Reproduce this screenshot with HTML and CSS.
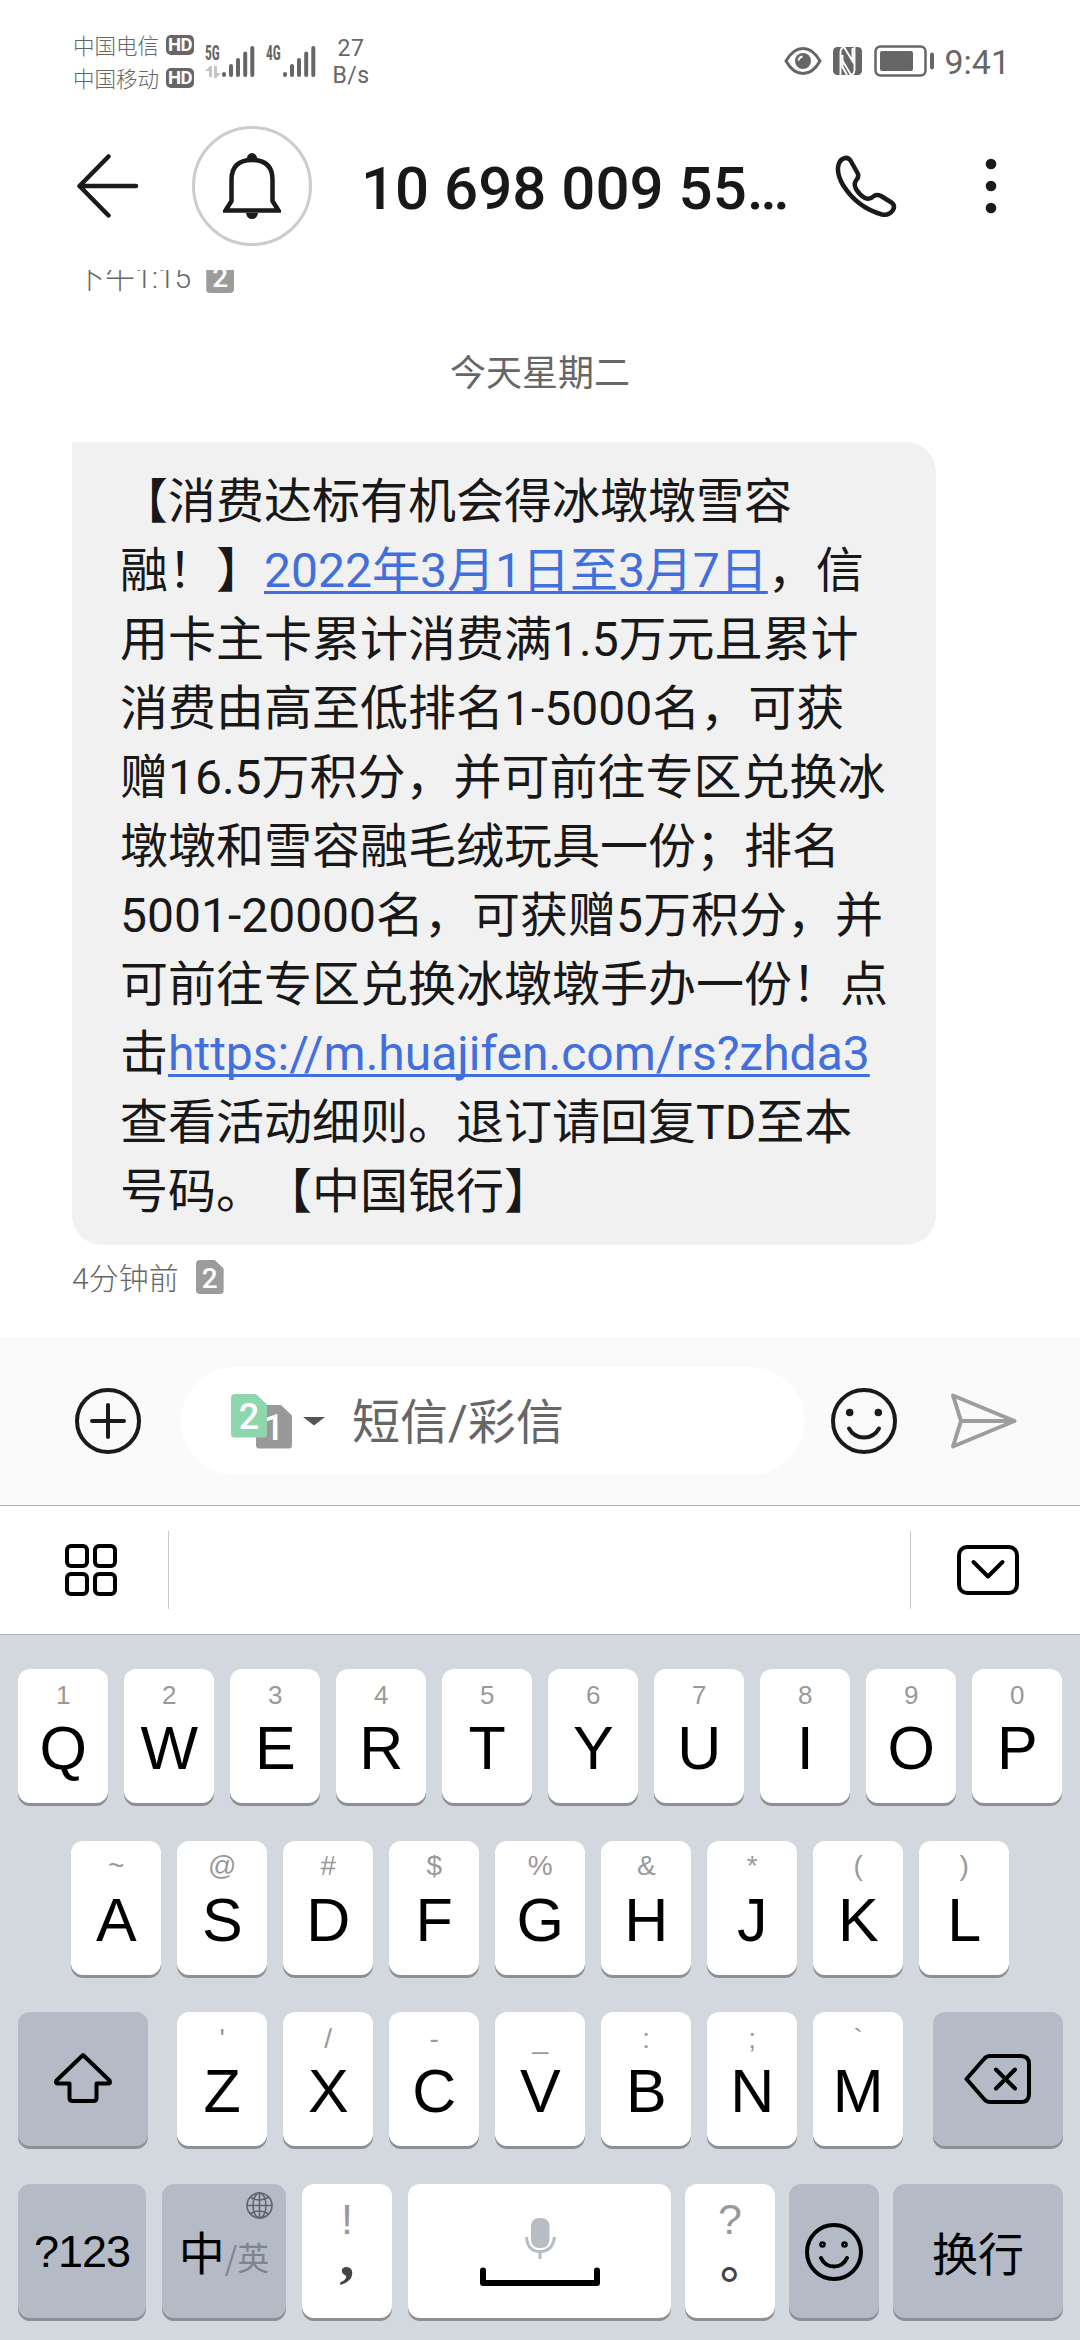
FILE: index.html
```html
<!DOCTYPE html>
<html lang="zh-CN">
<head>
<meta charset="utf-8">
<title>短信</title>
<link rel="stylesheet" href="styles.css">
</head>
<body>
<div class="status">
  <div class="carriers">
    <div class="carrier">中国电信<b class="hd">HD</b></div>
    <div class="carrier">中国移动<b class="hd">HD</b></div>
  </div>
  <div class="signal">
    <div class="net"><span>5G</span>
      <svg width="16" height="12" viewBox="0 0 16 12" fill="#c4c4c4"><path d="M0 5 5 0h2v11H4V5zM9 0h3v7h4l-5 5H9z"/></svg>
    </div>
    <svg class="bars" width="33" height="32" viewBox="0 0 33 32"><path d="M2 29v1M9 21v9M16 15v15M23.200 8.500V30M30.300 3v27"/></svg>
  </div>
  <div class="signal second">
    <div class="net"><span>4G</span></div>
    <svg class="bars" width="33" height="32" viewBox="0 0 33 32"><path d="M2 29v1M9 21v9M16 15v15M23.200 8.500V30M30.300 3v27"/></svg>
  </div>
  <div class="speed"><span>27</span><span>B/s</span></div>
  <div class="status-right">
    <svg width="38" height="30" viewBox="0 0 38 30"><path d="M2 15Q9 2.500 19 2.500T36 15Q29 27.500 19 27.500T2 15z" fill="none" stroke="#666" stroke-width="3"/><circle cx="19" cy="15" r="8" fill="#666"/><path d="M14.500 14.500a5 5 0 0 1 4-4" fill="none" stroke="#fff" stroke-width="2"/></svg>
    <svg width="29" height="28" viewBox="0 0 29 28"><rect width="29" height="28" rx="4.500" fill="#666"/><path d="M7.500 28V5q0-4 3.500-5l8.500 14V1M9.500 8v12l4.500 8M21.500 0v23q0 4-3.500 5L9.500 13.500" fill="none" stroke="#fff" stroke-width="1.900"/></svg>
    <svg width="61" height="32" viewBox="0 0 61 32"><rect x="1.500" y="1.500" width="50" height="29" rx="5" fill="none" stroke="#666" stroke-width="2.500"/><rect x="6" y="6" width="33" height="20" rx="2" fill="#666"/><path d="M58 9.500v13" stroke="#666" stroke-width="4" stroke-linecap="round"/></svg>
    <span class="clock">9:41</span>
  </div>
</div>

<header class="header">
  <svg width="62" height="64" viewBox="0 0 62 64" class="line"><path d="M59 32H2.500L31.500 2.500M2.500 32 31.500 61.500"/></svg>
  <div class="avatar">
    <svg width="58" height="68" viewBox="0 0 58 68"><path d="M8.500 49V28q0-20 20.500-20t20.500 20v21l6 9.500H2.500z" fill="none" stroke="#1a1a1a" stroke-width="4.500"/><path d="M23.500 8a5.500 7 0 0 1 11 0zM23 61h12q-1 6-6 6t-6-6z" fill="#1a1a1a"/></svg>
  </div>
  <h1 class="title">10 698 009 55…</h1>
  <svg width="62" height="64" viewBox="834 153 62 64" class="line phone"><path d="M841.500 158Q846.500 155 849.500 159.500L856.500 172Q858.500 175.500 855 179.500Q852.500 183 855 188Q859 194.500 864 197Q869 199 873 195Q876 193 880 195L890.500 201.500Q894.500 204.500 892 209Q888 215 881 213.500Q856 206.500 842 184Q836.500 174.500 837 167Q837.500 160.500 841.500 158z"/></svg>
  <svg class="more" width="12" height="56" viewBox="0 0 12 56"><circle cx="6" cy="6" r="5.300"/><circle cx="6" cy="28" r="5.300"/><circle cx="6" cy="50" r="5.300"/></svg>
</header>

<main class="thread">
  <div class="meta previous"><span>下午1:15</span><b class="sim">2</b></div>
  <div class="day">今天星期二</div>
  <p class="bubble">【消费达标有机会得冰墩墩雪容<br>融！】<a>2022年3月1日至3月7日</a>，信<br>用卡主卡累计消费满1.5万元且累计<br>消费由高至低排名1-5000名，可获<br>赠16.5万积分，并可前往专区兑换冰<br>墩墩和雪容融毛绒玩具一份；排名<br>5001-20000名，可获赠5万积分，并<br>可前往专区兑换冰墩墩手办一份！点<br>击<a>https://m.huajifen.com/rs?zhda3</a><br>查看活动细则。退订请回复TD至本<br>号码。【中国银行】</p>
  <div class="meta"><span>4分钟前</span><b class="sim">2</b></div>
</main>

<div class="composer">
  <svg width="68" height="68" viewBox="0 0 68 68" class="line"><circle cx="34" cy="34" r="31"/><path d="M34 18v32M18 34h32"/></svg>
  <div class="field">
    <div class="sims"><b class="sim one">1</b><b class="sim two">2</b></div>
    <svg width="22" height="9" viewBox="0 0 22 9"><path d="M0 0h22L11 8.500z" fill="#555"/></svg>
    <span class="placeholder">短信/彩信</span>
  </div>
  <svg width="68" height="68" viewBox="0 0 68 68" class="line smile"><circle cx="34" cy="34" r="31"/><path d="M19 41.500q5 9 15 9t15-9"/><circle cx="19.700" cy="25.500" r="1.800"/><circle cx="48.300" cy="25.500" r="1.800"/></svg>
  <svg width="70" height="58" viewBox="0 0 70 58" class="line send"><path d="M4 3.500 65.500 29 4 54.500 12 29zM12 29h52"/></svg>
</div>

<div class="toolbar">
  <svg width="52" height="52" viewBox="0 0 52 52" class="line dark"><rect x="2" y="2" width="20" height="20" rx="4"/><rect x="30" y="2" width="20" height="20" rx="4"/><rect x="2" y="30" width="20" height="20" rx="4"/><rect x="30" y="30" width="20" height="20" rx="4"/></svg>
  <div class="strip"></div>
  <svg width="62" height="50" viewBox="0 0 62 50" class="line dark"><rect x="2" y="2" width="58" height="46" rx="8"/><path d="M16.500 17 31 31.500 45.500 17"/></svg>
</div>

<div class="keyboard">
  <div class="row">
    <div class="key num"><i>1</i>Q</div><div class="key num"><i>2</i>W</div><div class="key num"><i>3</i>E</div><div class="key num"><i>4</i>R</div><div class="key num"><i>5</i>T</div><div class="key num"><i>6</i>Y</div><div class="key num"><i>7</i>U</div><div class="key num"><i>8</i>I</div><div class="key num"><i>9</i>O</div><div class="key num"><i>0</i>P</div>
  </div>
  <div class="row">
    <div class="key"><i>~</i>A</div><div class="key"><i>@</i>S</div><div class="key"><i>#</i>D</div><div class="key"><i>$</i>F</div><div class="key"><i>%</i>G</div><div class="key"><i>&amp;</i>H</div><div class="key"><i>*</i>J</div><div class="key"><i>(</i>K</div><div class="key"><i>)</i>L</div>
  </div>
  <div class="row spread">
    <div class="key fn wide"><svg width="60" height="52" viewBox="0 0 60 52" class="line dark"><path d="M30 3 56.500 28.500q1.500 3-1.500 3H43.500V46q0 3-3 3h-21q-3 0-3-3V31.500H5q-3 0-1.500-3z"/></svg></div>
    <div class="letters">
      <div class="key"><i>'</i>Z</div><div class="key"><i>/</i>X</div><div class="key"><i>-</i>C</div><div class="key"><i>_</i>V</div><div class="key"><i>:</i>B</div><div class="key"><i>;</i>N</div><div class="key"><i>`</i>M</div>
    </div>
    <div class="key fn wide"><svg width="68" height="50" viewBox="0 0 68 50" class="line dark"><path d="M2.500 25 20 5q2.500-3 6-3h31q8 0 8 8v30q0 8-8 8H26q-3.500 0-6-3zM32 15.500 51 34.500M51 15.500 32 34.500"/></svg></div>
  </div>
  <div class="row bottom">
    <div class="key fn symbols">?123</div>
    <div class="key fn lang">
      <svg class="globe" width="27" height="27" viewBox="0 0 27 27"><circle cx="13.500" cy="13.500" r="12.500"/><ellipse cx="13.500" cy="13.500" rx="6.500" ry="12.500"/><path d="M13.500 1v25M1 13.500h25M4 5q9.500 6 19 0M4 22q9.500-6 19 0"/></svg>
      <span class="zh">中</span><span class="en">/英</span>
    </div>
    <div class="key punct"><i>!</i><span class="comma">,</span></div>
    <div class="key space"><svg width="122" height="72" viewBox="479 2216 122 72"><rect x="531" y="2218" width="18.500" height="30" rx="8" fill="#b8bcc3"/><path d="M526.500 2237q1 14.500 13.500 14.500t14.500-14.500M540 2252v7" fill="none" stroke="#b8bcc3" stroke-width="3"/><path d="M483 2270.500V2283h114v-12.500" fill="none" stroke="#000" stroke-width="6" stroke-linecap="round" stroke-linejoin="round"/></svg></div>
    <div class="key punct"><i>?</i><span class="stop">。</span></div>
    <div class="key fn emoji"><svg width="58" height="60" viewBox="0 0 58 60" class="line dark"><circle cx="29" cy="30" r="27"/><path d="M16 36q4 8.500 13 8.500t13-8.500"/><circle cx="17.500" cy="22.500" r="1.300"/><circle cx="39.500" cy="22.500" r="1.300"/></svg></div>
    <div class="key fn enter">换行</div>
  </div>
</div>
</body>
</html>
```
FILE: styles.css
```css
* { box-sizing: border-box; }
body {
  margin: 0;
  width: 1080px;
  height: 2340px;
  overflow: hidden;
  display: flex;
  flex-direction: column;
  background: #fff;
  color: #181818;
  font-family: Roboto, "Noto Sans CJK SC", sans-serif;
  text-spacing-trim: space-all;
}
svg { display: block; flex: none; }
.line { fill: none; stroke: #1a1a1a; stroke-width: 4; stroke-linecap: round; stroke-linejoin: round; }
.dark { stroke: #000; }

/* status bar */
.status { display: flex; height: 126px; padding: 29px 70px 0 73px; color: #666; flex: none; }
.carriers { width: 132px; margin-top: -1px; }
.carrier { display: flex; align-items: center; gap: 7px; height: 33px; font-size: 21.500px; font-weight: 300; white-space: nowrap; }
.hd { width: 28px; height: 20px; border-radius: 5px; background: #666; color: #fff; font: 700 18.500px/21px Roboto, sans-serif; letter-spacing: -.5px; text-align: center; }
.signal { display: flex; width: 61px; padding-top: 16px; }
.net { width: 17px; font: 700 20.500px/17px "Roboto Condensed", Roboto, sans-serif; }
.net span { display: block; transform: scaleX(.66); transform-origin: left; }
.net svg { margin-top: 4px; }
.bars { fill: none; stroke: #666; stroke-width: 4; stroke-linecap: round; }
.speed { display: flex; flex-direction: column; align-items: center; width: 44px; margin-left: 2px; padding-top: 6px; font-size: 23px; line-height: 27px; letter-spacing: .5px; }
.status-right { display: flex; align-items: center; height: 32px; margin: 16px 0 0 auto; gap: 11.500px; }
.clock { margin-left: -2px; padding-top: 2px; font-size: 34px; line-height: 32px; }

/* conversation header */
.header { display: flex; align-items: center; height: 120px; padding-left: 77px; flex: none; }
.header .line { stroke-width: 4.500; }
.avatar { display: flex; align-items: center; justify-content: center; width: 120px; height: 120px; margin-left: 53px; border: 3px solid #ccc; border-radius: 50%; }
.title { width: 438px; margin: 5px 0 0 49px; font-size: 60px; font-weight: 500; line-height: 70px; white-space: nowrap; }
.phone { margin-left: 36px; }
.more { margin-left: 88px; fill: #1a1a1a; }

/* messages */
.thread { height: 1067px; margin-top: 24px; padding-left: 72px; overflow: hidden; flex: none; }
.meta { display: flex; align-items: center; gap: 17px; height: 34px; margin-top: 15px; color: #666; font-size: 30px; font-weight: 300; line-height: 34px; }
.meta span { padding-top: 3px; }
.meta.previous { margin-top: -11px; gap: 15px; padding-left: 3px; }
.sim { display: block; width: 28px; height: 34px; border-radius: 4px; background: #9c9c9c; color: #fff; clip-path: polygon(0 0, 68% 0, 100% 25%, 100% 100%, 0 100%); font: 500 28px/37px Roboto, sans-serif; text-align: center; }
.day { height: 54px; margin: 53px 72px 0 0; padding-top: 1px; color: #666; font-size: 36px; line-height: 54px; text-align: center; }
.bubble { width: 864px; height: 803px; margin: 42px 0 0; padding: 25px 0 0 48px; border-radius: 0 30px 30px 30px; background: #f1f1f1; font-size: 48px; line-height: 69px; white-space: nowrap; }
.bubble a { color: #416fdd; text-decoration: underline 3px; text-underline-offset: 4px; text-decoration-skip-ink: none; }

/* composer */
.composer { display: flex; align-items: center; height: 168px; padding-left: 74px; background: #fafafa; flex: none; }
.field { display: flex; align-items: center; width: 623px; height: 108px; margin-left: 39px; padding-left: 50px; border-radius: 54px; background: #fff; }
.sims { display: grid; width: 61px; height: 55px; margin-right: 11px; }
.sims .sim { grid-area: 1 / 1; width: 36px; height: 44px; font-size: 36px; line-height: 46px; }
.sims .one { margin: 11px 0 0 25px; background: #999; }
.sims .two { background: #8ed6ae; }
.placeholder { margin: 4px 0 0 27px; color: #666; font-size: 48px; line-height: 70px; }
.smile { margin-left: 26px; }
.smile circle + path ~ circle { fill: #1a1a1a; }
.send { margin-left: 51px; stroke: #9d9d9d; }

/* keyboard toolbar */
.toolbar { display: flex; align-items: center; height: 130px; padding: 0 61px 0 65px; border: solid #adb0b4; border-width: 1px 0; flex: none; }
.strip { flex: 1; height: 78px; margin: 0 46px 0 51px; border: solid #c8c8c8; border-width: 0 1px; }

/* keys */
.keyboard { display: flex; flex-direction: column; gap: 37.500px; flex: 1; padding: 34px 17.500px 0 18px; background: #d3d8de; }
.row { display: flex; justify-content: center; gap: 16px; }
.spread { justify-content: space-between; }
.spread i { padding-top: 2px; }
.letters { display: flex; gap: 16px; }
.bottom { gap: 14px; justify-content: flex-start; }
.key { display: flex; flex-direction: column; align-items: center; width: 90px; height: 134px; border-radius: 12px; background: #fff; box-shadow: 0 3px #8c8f94; color: #000; font: 61px/62px "Liberation Sans", sans-serif; flex: none; }
.key i { height: 48px; color: #999; font: 28px/50px "Liberation Sans", sans-serif; }
.key.num i { font-size: 26px; line-height: 52px; }
.fn { justify-content: center; background: #b4bbc6; }
.wide { width: 130px; }
.wide svg { margin-bottom: 2px; }
.wide .dark[width="68"] { margin-bottom: 0; }
.symbols { width: 128px; padding-top: 3px; font-size: 45px; letter-spacing: -1px; }
.lang { position: relative; flex-direction: row; align-items: baseline; width: 124px; margin: 0 2px; padding-top: 36px; font: 46px/60px "Noto Sans CJK SC", sans-serif; }
.lang .en { color: #7e838c; font-size: 32px; }
.globe { position: absolute; top: 8px; right: 13px; fill: none; stroke: #5f646d; stroke-width: 1.600; }
.punct i { height: 68px; font-size: 43px; line-height: 70px; }
.comma { color: #444; font: 700 60px/8px "Liberation Serif", serif; }
.stop { padding-left: 28px; color: #444; font: 500 48px/10px "Noto Sans CJK SC", sans-serif; }
.space { width: 263px; margin-left: 2px; padding-top: 32px; }
.emoji { padding-top: 2px; }
.enter { width: 170px; padding-top: 0; font: 46px/60px "Noto Sans CJK SC", sans-serif; }
```
